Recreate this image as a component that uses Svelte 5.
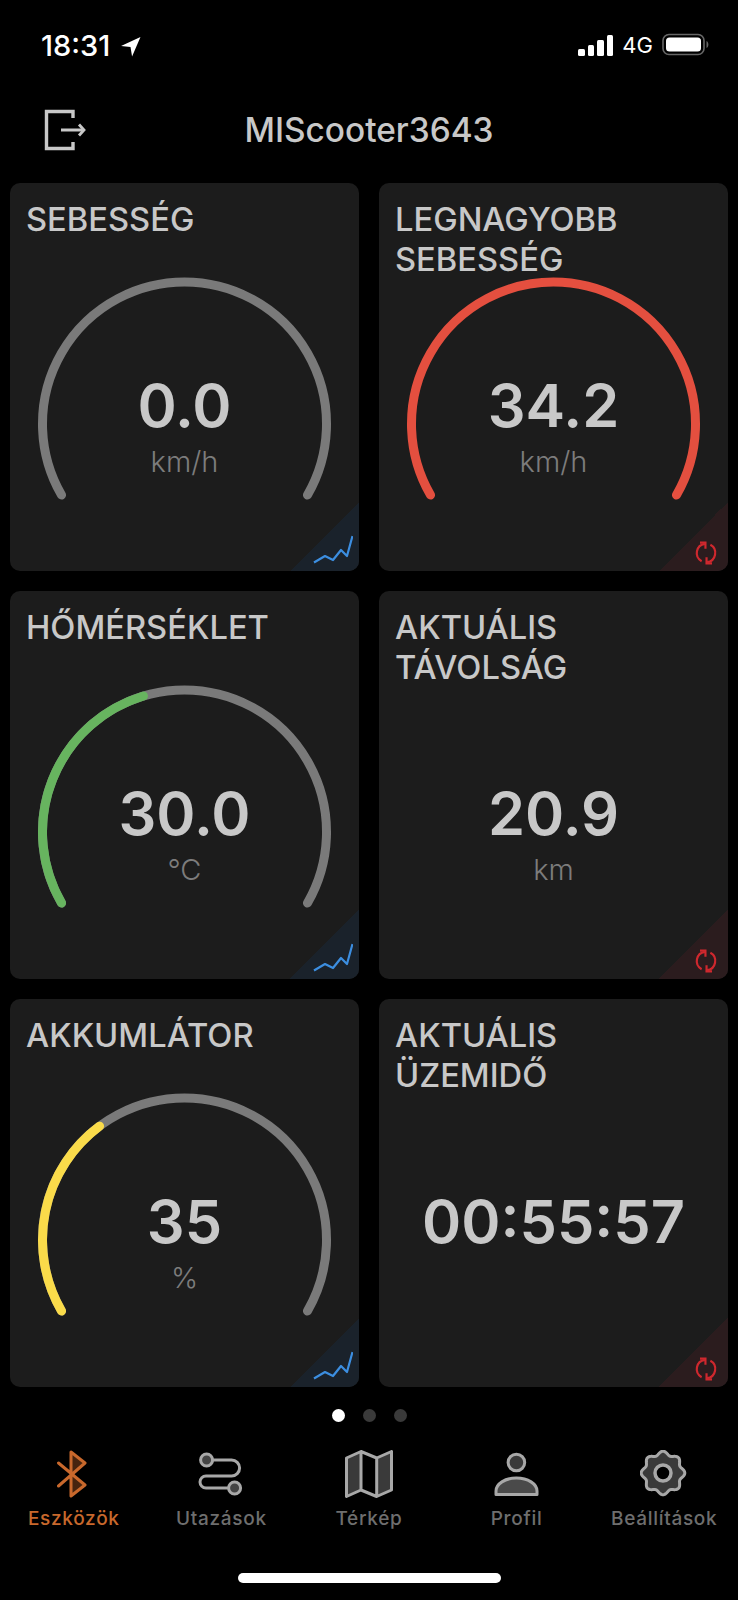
<script>
	const cx = 174.5, cy = 241, r = 142;
	const polar = (t) => {
		const a = ((-120 + 240 * t - 90) * Math.PI) / 180;
		return `${(cx + r * Math.cos(a)).toFixed(2)} ${(cy + r * Math.sin(a)).toFixed(2)}`;
	};
	const arc = (t) => `M ${polar(0)} A ${r} ${r} 0 ${240 * t > 180 ? 1 : 0} 1 ${polar(t)}`;

	const cards = [
		{ title: ['SEBESSÉG'], value: '0.0', unit: 'km/h', gauge: 0, kind: 'trend' },
		{ title: ['LEGNAGYOBB', 'SEBESSÉG'], value: '34.2', unit: 'km/h', gauge: 1, color: '#e44f3f', kind: 'reset' },
		{ title: ['HŐMÉRSÉKLET'], value: '30.0', unit: '°C', gauge: 0.43, color: '#67b45f', kind: 'trend' },
		{ title: ['AKTUÁLIS', 'TÁVOLSÁG'], value: '20.9', unit: 'km', kind: 'reset' },
		{ title: ['AKKUMLÁTOR'], value: '35', unit: '%', gauge: 0.347, color: '#fadb4a', kind: 'trend' },
		{ title: ['AKTUÁLIS', 'ÜZEMIDŐ'], value: '00:55:57', kind: 'reset' }
	];

	const tabs = ['Eszközök', 'Utazások', 'Térkép', 'Profil', 'Beállítások'];

	// wavy outline for the settings cog
	let gear = '';
	for (let i = 0; i < 160; i++) {
		const a = (i / 160) * Math.PI * 2;
		const rr = 20 + 1.8 * Math.cos(a * 8);
		gear += `${i ? 'L' : 'M'}${(23 + rr * Math.cos(a - Math.PI / 2)).toFixed(2)} ${(23 + rr * Math.sin(a - Math.PI / 2)).toFixed(2)}`;
	}
	gear += 'Z';
</script>

<div class="screen">
	<div class="status">
		<div class="time">
			18:31
			<svg width="21" height="21" viewBox="0 0 20 20"><path d="M19.5 1 L1 9.5 L10 10.5 L11.5 19.5 Z" fill="#fff" /></svg>
		</div>
		<div class="status-right">
			<div class="signal"><i></i><i></i><i></i><i></i></div>
			<span class="net">4G</span>
			<svg width="48" height="24" viewBox="0 0 48 24">
				<rect x="1" y="1.5" width="41" height="20" rx="6" fill="none" stroke="#666" stroke-width="1.6" />
				<rect x="4" y="4.5" width="35" height="14" rx="3.5" fill="#fff" />
				<path d="M44.5 8 C47 9 47 14 44.5 15 Z" fill="#666" />
			</svg>
		</div>
	</div>

	<header class="header">
		<button class="exit" aria-label="exit">
			<svg width="42" height="42" viewBox="0 0 42 42" fill="none" stroke="#c8c8c8" stroke-width="3.4">
				<path d="M29 9 V2.5 H2.5 V39.5 H29 V33" />
				<path d="M17 21 H40" stroke-width="3" />
				<path d="M35 15.5 L40 21 L35 26.5" stroke-width="2.8" />
			</svg>
		</button>
		<h1>MIScooter3643</h1>
	</header>

	<div class="grid">
		{#each cards as card}
			<div class="card">
				<div class="title">
					{#each card.title as line}<div>{line}</div>{/each}
				</div>
				{#if card.gauge !== undefined}
					<svg class="gauge" viewBox="0 0 349 388" fill="none" stroke-width="9" stroke-linecap="round">
						<path d={arc(1)} stroke={card.color && card.gauge === 1 ? card.color : '#7a7a7a'} />
						{#if card.gauge > 0 && card.gauge < 1}
							<path d={arc(card.gauge)} stroke={card.color} />
						{/if}
					</svg>
				{/if}
				<div class="reading">
					<div class="value">{card.value}</div>
					{#if card.unit}<div class="unit">{card.unit}</div>{/if}
				</div>
				<div class="corner {card.kind}">
					{#if card.kind === 'trend'}
						<svg width="40" height="32" viewBox="0 0 40 32" fill="none" stroke="#3c8ee0" stroke-width="2.2" stroke-linejoin="round">
							<path d="M1 29.5 L12 23 L20 27 L28 17 L34 23 L39.5 3" />
						</svg>
					{:else}
						<svg width="24" height="24" viewBox="0 0 22 22" fill="none" stroke="#cf282e" stroke-width="2">
							<path d="M10 2.6 A8.5 8.5 0 0 0 7 18.5" />
							<path d="M12 19.4 A8.5 8.5 0 0 0 15 3.5" />
							<path d="M5.5 1.5 H10.5 V7" />
							<path d="M16.5 20.5 H11.5 V15" />
						</svg>
					{/if}
				</div>
			</div>
		{/each}
	</div>

	<div class="dots"><i class="on"></i><i></i><i></i></div>

	<nav class="tabs">
		{#each tabs as tab, i}
			<div class="tab" class:active={i === 0}>
				<svg width="48" height="48" viewBox="0 0 48 48">
					{#if i === 0}
						<path d="M21 24 L35 13 L21 2 Z M21 24 L35 35 L21 46 Z" fill="#c8682c" fill-opacity="0.35" />
						<path d="M8.5 13 L35 35 L21 46 V2 L35 13 L8.5 36" fill="none" stroke="#c8682c" stroke-width="3" stroke-linejoin="round" stroke-linecap="round" />
					{:else if i === 1}
						<path d="M9.6 10 H34.6 A8 8 0 0 1 34.6 26 H9 A6 6 0 0 0 9 38 H37.6" fill="none" stroke="#a8a8a8" stroke-width="3" />
						<circle cx="9.6" cy="10" r="6" fill="#444" stroke="#a8a8a8" stroke-width="3" />
						<circle cx="37.6" cy="38" r="6" fill="#444" stroke="#a8a8a8" stroke-width="3" />
					{:else if i === 2}
						<path d="M1.5 8 L16 1.5 V40 L1.5 46.5 Z M31.7 8 L46.5 1.5 V40 L31.7 46.5 Z" fill="#3a3a3a" />
						<path d="M1.5 8 L16 1.5 L31.7 8 L46.5 1.5 V40 L31.7 46.5 L16 40 L1.5 46.5 Z M16 1.5 V40 M31.7 8 V46.5" fill="none" stroke="#a8a8a8" stroke-width="3" stroke-linejoin="round" />
					{:else if i === 3}
						<circle cx="23.4" cy="12.5" r="8.3" fill="#3a3a3a" stroke="#a8a8a8" stroke-width="3" />
						<path d="M3 44.5 V41 C3 34 12 28 23.4 28 C35 28 44 34 44 41 V44.5 Z" fill="#4a4a4a" stroke="#a8a8a8" stroke-width="3" stroke-linejoin="round" />
					{:else}
						<path d={gear} fill="#3a3a3a" stroke="#a8a8a8" stroke-width="3" stroke-linejoin="round" />
						<circle cx="23" cy="23" r="8" fill="#000" stroke="#a8a8a8" stroke-width="3.5" />
					{/if}
				</svg>
				<span>{tab}</span>
			</div>
		{/each}
	</nav>

	<div class="home-bar"></div>
</div>

<style>
	:global(body) {
		background: #000;
	}

	.screen {
		width: 738px;
		height: 1600px;
		background: #000;
		color: #c8c8c8;
		font-family: Inter, 'Liberation Sans', sans-serif;
		overflow: hidden;
	}

	.status {
		height: 90px;
		box-sizing: border-box;
		padding: 32px 28px 0 41px;
		display: flex;
		justify-content: space-between;
		align-items: flex-start;
		color: #fff;
	}

	.time {
		display: flex;
		align-items: center;
		gap: 10px;
		font-size: 29px;
		font-weight: 500;
		line-height: 28px;
	}

	.status-right {
		display: flex;
		align-items: center;
		gap: 9px;
		height: 26px;
	}

	.signal {
		display: flex;
		align-items: flex-end;
		gap: 3px;
		height: 21px;
	}

	.signal i {
		width: 6.5px;
		background: #fff;
		border-radius: 1.5px;
	}
	.signal i:nth-child(1) { height: 7px; }
	.signal i:nth-child(2) { height: 11px; }
	.signal i:nth-child(3) { height: 16px; }
	.signal i:nth-child(4) { height: 21px; }

	.net {
		font-size: 22px;
		font-weight: 400;
	}

	.header {
		height: 93px;
		box-sizing: border-box;
		padding-bottom: 13px;
		position: relative;
		display: flex;
		align-items: center;
		justify-content: center;
	}

	.exit {
		position: absolute;
		left: 44px;
		top: 19px;
		padding: 0;
		border: 0;
		background: none;
		display: flex;
	}

	h1 {
		margin: 0;
		font-size: 33.4px;
		font-weight: 500;
		line-height: 40px;
		color: #c8c8c8;
	}

	.grid {
		display: grid;
		grid-template-columns: 349px 349px;
		grid-auto-rows: 388px;
		gap: 20px;
		padding: 0 10px;
	}

	.card {
		position: relative;
		display: grid;
		background: #1c1c1c;
		border-radius: 10px;
		overflow: hidden;
	}

	.card > * {
		grid-area: 1 / 1;
	}

	.title {
		padding: 16px 0 0 16px;
		font-size: 32.7px;
		font-weight: 500;
		line-height: 40px;
		color: #c8c8c8;
	}

	.gauge {
		width: 349px;
		height: 388px;
	}

	.reading {
		display: flex;
		flex-direction: column;
		align-items: center;
		padding-top: 186px;
	}

	.value {
		font-size: 59.5px;
		font-weight: 600;
		line-height: 72px;
		color: #c8c8c8;
	}

	.unit {
		margin-top: 3px;
		font-size: 29px;
		font-weight: 300;
		line-height: 36px;
		color: #7c7c7c;
	}

	.corner {
		position: absolute;
		right: 0;
		bottom: 0;
		width: 69px;
		height: 69px;
	}

	.corner svg {
		position: absolute;
	}

	.corner.trend {
		background: linear-gradient(to bottom right, transparent 50%, #1a222b 50%);
	}
	.corner.trend svg {
		right: 6px;
		bottom: 6px;
	}

	.corner.reset {
		background: linear-gradient(to bottom right, transparent 50%, #2b1c1e 50%);
	}
	.corner.reset svg {
		right: 10px;
		bottom: 6px;
	}

	.dots {
		display: flex;
		justify-content: center;
		gap: 18px;
		margin-top: 22px;
		height: 13px;
	}

	.dots i {
		width: 13px;
		height: 13px;
		border-radius: 50%;
		background: #3a3a3a;
	}

	.dots i.on {
		background: #fff;
	}

	.tabs {
		display: grid;
		grid-template-columns: repeat(5, 1fr);
		margin-top: 28px;
	}

	.tab {
		display: flex;
		flex-direction: column;
		align-items: center;
		color: #6e6e6e;
		font-size: 19px;
		font-weight: 500;
		letter-spacing: 0.7px;
	}

	.tab span {
		margin-top: 10px;
		line-height: 22px;
	}

	.tab.active {
		color: #c8682c;
	}

	.home-bar {
		width: 263px;
		height: 10px;
		border-radius: 5px;
		background: #fff;
		margin: 43px auto 0;
	}
</style>
